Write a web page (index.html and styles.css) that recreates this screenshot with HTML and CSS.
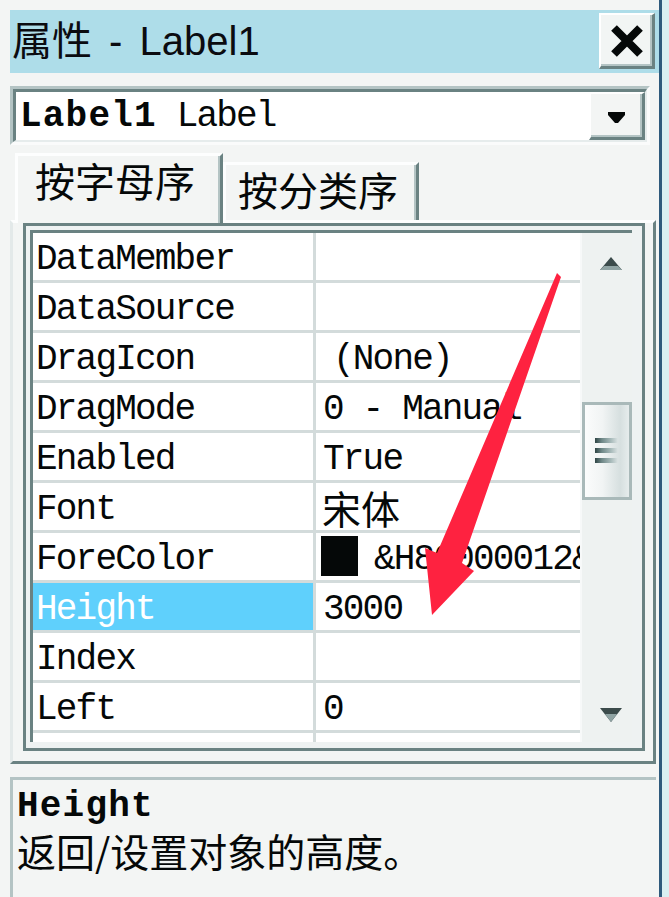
FILE: index.html
```html
<!DOCTYPE html>
<html lang="zh-CN">
<head>
<meta charset="utf-8">
<title>属性 - Label1</title>
<link rel="stylesheet" href="styles.css">
</head>
<body>
<div class="screen">
  <div class="window">
    <div class="titlebar">
      <span class="title">属性 - Label1</span>
      <div class="close">
        <svg width="32" height="32" viewBox="0 0 32 32"><path d="M3 3 L29 29 M29 3 L3 29" stroke="#050808" stroke-width="8" fill="none"/></svg>
      </div>
    </div>

    <div class="combo">
      <div class="combo-inner">
        <span class="combo-text"><b class="bold">Label1</b> Label</span>
        <div class="dd">
          <svg width="17" height="11" viewBox="0 0 17 11"><polygon points="0,0 17,0 17,3 10,11 7,11 0,3" fill="#050808"/></svg>
        </div>
      </div>
    </div>

    <div class="tabs">
      <div class="tab active">按字母序</div>
      <div class="tab">按分类序</div>
    </div>

    <div class="page">
      <div class="grid-outer">
        <div class="grid">
          <div class="rows">
            <div class="row"><div class="name">DataMember</div><div class="val"></div></div>
            <div class="row"><div class="name">DataSource</div><div class="val"></div></div>
            <div class="row"><div class="name">DragIcon</div><div class="val"><span class="none">(None)</span></div></div>
            <div class="row"><div class="name">DragMode</div><div class="val">0 - Manual</div></div>
            <div class="row"><div class="name">Enabled</div><div class="val">True</div></div>
            <div class="row"><div class="name">Font</div><div class="val"><span class="cjk">宋体</span></div></div>
            <div class="row"><div class="name">ForeColor</div><div class="val"><span class="swatch"></span><span class="hex">&amp;H80000012&amp;</span></div></div>
            <div class="row selected"><div class="name">Height</div><div class="val">3000</div></div>
            <div class="row"><div class="name">Index</div><div class="val"></div></div>
            <div class="row"><div class="name">Left</div><div class="val">0</div></div>
            <div class="row partial"><div class="name"></div><div class="val"></div></div>
          </div>
          <div class="scrollbar">
            <svg class="sb-up" width="22" height="13" viewBox="0 0 22 13"><polygon points="11,0 22,13 0,13" fill="#3b4b4b"/><polygon points="4,9 18,9 22,13 0,13" fill="#8fa3a3"/></svg>
            <div class="thumb">
              <div class="grip"></div>
              <div class="grip"></div>
              <div class="grip"></div>
            </div>
            <svg class="sb-down" width="22" height="14" viewBox="0 0 22 14"><polygon points="0,0 22,0 11,14" fill="#3b4b4b"/><polygon points="5,6 17,6 11,14" fill="#8fa3a3"/></svg>
          </div>
        </div>
      </div>
    </div>

    <div class="desc">
      <div class="desc-title">Height</div>
      <div class="desc-text">返回/设置对象的高度。</div>
    </div>
  </div>
  <div class="edge"></div>
</div>

<svg class="arrow" width="669" height="897" viewBox="0 0 669 897">
  <polygon points="557,273 561,277 462,563 474,571 432,615 425,548 437,553" fill="#fe2240"/>
</svg>
</body>
</html>
```

FILE: styles.css
```css
* { box-sizing: border-box; }
html, body { margin: 0; padding: 0; }
body {
  width: 669px;
  height: 897px;
  overflow: hidden;
  background: #f3f5f4;
  color: #050808;
  font-family: "Liberation Mono", "Noto Sans CJK SC", monospace;
  position: relative;
}
.screen { display: flex; height: 897px; }
.window { width: 659px; padding: 10px 0 0 10px; }
.edge { width: 10px; border-left: 3px solid #2e5a7c; background: #d9eff2; }

/* title bar */
.titlebar {
  height: 63px;
  background: #aedde9;
  display: flex;
  justify-content: space-between;
  align-items: flex-start;
}
.title {
  font-family: "Liberation Sans", "Noto Sans CJK SC", sans-serif;
  font-size: 40px;
  line-height: 63px;
  padding-left: 2px;
  word-spacing: 6px;
  color: #0b0b10;
}
.close {
  margin: 3px 4px 0 0;
  width: 56px;
  height: 56px;
  background: #f2f5f4;
  border-style: solid;
  border-width: 2px 3px 3px 2px;
  border-color: #ffffff #6a8282 #6a8282 #ffffff;
  box-shadow: inset -2px -2px 0 #b4c4c4;
  display: flex;
  align-items: center;
  justify-content: center;
}

/* combo */
.combo {
  margin-top: 13px;
  width: 640px;
  height: 59px;
  border: 3px solid;
  border-color: #b4c4c4 #fafbfb #fafbfb #b4c4c4;
}
.combo-inner {
  height: 53px;
  background: #ffffff;
  border-style: solid;
  border-width: 3px 2px 2px 3px;
  border-color: #6a8282 #e6ecec #e6ecec #6a8282;
  display: flex;
  justify-content: space-between;
}
.combo-text {
  font-size: 36px;
  line-height: 50px;
  letter-spacing: -1.8px;
  padding-left: 4px;
  white-space: pre;
}
.bold { font-weight: bold; letter-spacing: 1.2px; }
.dd {
  width: 56px;
  height: 48px;
  background: #f3f5f4;
  border-style: solid;
  border-width: 2px 3px 3px 2px;
  border-color: #ffffff #6a8282 #6a8282 #ffffff;
  box-shadow: inset -2px -2px 0 #b4c4c4;
  display: flex;
  align-items: center;
  justify-content: center;
  padding-top: 4px;
}

/* tabs */
.tabs {
  margin-top: 8px;
  height: 67px;
  padding-left: 5px;
  display: flex;
  align-items: flex-end;
}
.tab {
  font-family: "Noto Sans CJK SC", sans-serif;
  font-size: 40px;
  line-height: 48px;
  background: #f3f5f4;
  border-style: solid;
  border-width: 3px 3px 0 3px;
  border-color: #fdfefe #6a8282 #fdfefe #fdfefe;
  box-shadow: inset -2px 0 0 #b4c4c4;
  color: #050808;
}
.tab.active {
  width: 208px;
  height: 70px;
  margin-bottom: -3px;
  position: relative;
  z-index: 1;
  padding-left: 17px;
}
.tab:not(.active) {
  width: 196px;
  height: 58px;
  padding-left: 12px;
}

/* property page */
.page {
  width: 646px;
  height: 544px;
  border-style: solid;
  border-width: 3px;
  border-color: #fdfefe #6a8282 #6a8282 #e3e9e9;
  padding: 0 8px 10px 10px;
}
.grid-outer {
  width: 622px;
  border: 3px solid #6a8282;
  background: #eef2f2;
  padding: 4px 10px 6px 4px;
}
.grid {
  display: flex;
  border-top: 3px solid #6a8282;
  border-left: 3px solid #6a8282;
  height: 512px;
}
.rows { width: 547px; background: #ffffff; overflow: hidden; }
.row {
  display: flex;
  height: 50px;
  border-bottom: 3px solid #d3dbdb;
  font-size: 36px;
  letter-spacing: -1.8px;
  white-space: pre;
}
.row.partial { height: 9px; border-bottom: none; }
.row.partial .name, .row.partial .val { height: 9px; }
.name {
  width: 283px;
  height: 47px;
  line-height: 53px;
  padding-left: 3px;
  border-right: 3px solid #d3dbdb;
  overflow: hidden;
}
.val {
  width: 264px;
  height: 47px;
  line-height: 53px;
  padding-left: 7px;
  overflow: hidden;
  display: flex;
  align-items: flex-start;
}
.selected .name { background: #5fd0fc; color: #ffffff; }
.none { margin-left: 10px; }
.cjk {
  font-family: "Noto Sans CJK SC", sans-serif;
  font-size: 39px;
  line-height: 47px;
  letter-spacing: 0;
  margin-left: -1px;
  padding-top: 1px;
}
.swatch {
  width: 37px;
  height: 40px;
  margin: 3px 16px 0 -2px;
  background: #050808;
  flex: none;
}
.hex { flex: none; }

/* scrollbar */
.scrollbar {
  width: 52px;
  background: #eef2f1;
  border-left: 2px solid #f7f9f9;
  display: flex;
  flex-direction: column;
  align-items: center;
}
.sb-up { margin: 24px 0 0 8px; }
.thumb {
  margin-top: 132px;
  width: 50px;
  height: 98px;
  border: 3px solid #a9b9b9;
  background: linear-gradient(90deg, #fbfcfc, #f1f4f4 40%, #d6dfdf 80%, #e6ecec);
  padding: 33px 0 0 10px;
  display: flex;
  flex-direction: column;
  gap: 5px;
}
.grip {
  width: 23px;
  height: 5px;
  background: linear-gradient(90deg, #2f4545, #6f8888 30%, #a9bbbb 70%, #dbe3e3);
}
.sb-down { margin: 208px 0 0 8px; }

/* description */
.desc {
  margin-top: 13px;
  width: 646px;
  height: 130px;
  border-top: 3px solid #b4c4c4;
  border-left: 3px solid #b4c4c4;
  padding: 8px 0 0 4px;
}
.desc-title {
  font-size: 36px;
  line-height: 38px;
  font-weight: bold;
  letter-spacing: 1.2px;
}
.desc-text {
  font-family: "Noto Sans CJK SC", sans-serif;
  font-size: 39px;
  line-height: 44px;
  margin-top: 2px;
}

/* annotation arrow overlay */
.arrow { position: absolute; left: 0; top: 0; pointer-events: none; }
```
